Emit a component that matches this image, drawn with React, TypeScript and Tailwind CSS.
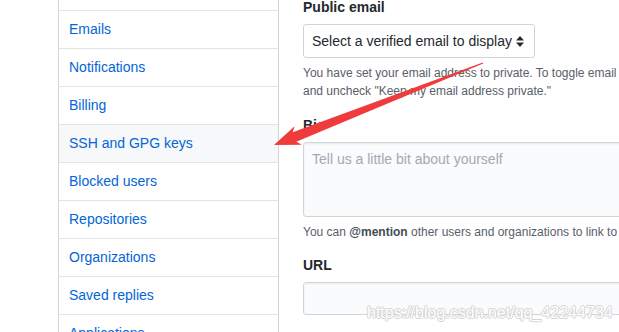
export default function App() {
  const items = [
    "Account",
    "Emails",
    "Notifications",
    "Billing",
    "SSH and GPG keys",
    "Blocked users",
    "Repositories",
    "Organizations",
    "Saved replies",
    "Applications",
  ];

  return (
    <div className="relative w-[619px] h-[332px] overflow-hidden bg-white font-['Liberation_Sans',Arial,sans-serif]">
      <div className="flex items-start pl-[58px]">
        {/* Settings menu */}
        <nav className="w-[221px] shrink-0 -mt-[28px] border border-[#d1d5da] rounded-[3px]">
          {items.map((item, i) => (
            <div
              key={item}
              className={`flex items-center px-[10px] text-[14px] text-[#0366d6] ${
                i === 0 ? "h-[37px]" : "h-[38px] border-t border-[#e1e4e8]"
              } ${item === "SSH and GPG keys" ? "bg-[#f6f8fa]" : ""}`}
            >
              {item}
            </div>
          ))}
        </nav>

        {/* Profile form */}
        <div className="ml-[24px] w-[440px] shrink-0 -mt-[3px]">
          <div>
            <div className="h-[21px] leading-[21px] mb-[6px] text-[14px] font-semibold text-[#24292e]">Public email</div>
            <div className="w-[232px] h-[34px] flex items-center justify-between pl-[8px] pr-[10px] border border-[#d1d5da] rounded-[3px] bg-white text-[14px] text-[#24292e]">
              <span>Select a verified email to display</span>
              <svg width="8" height="11" viewBox="0 0 8 11">
                <path d="M4 0 L8 4.5 H0 Z M4 11 L0 6.5 H8 Z" fill="#24292e" />
              </svg>
            </div>
            <p className="mt-[6px] text-[12px] leading-[18px] text-[#586069] whitespace-nowrap">
              You have set your email address to private. To toggle email privacy, go to email settings
              <br />
              and uncheck "Keep my email address private."
            </p>
          </div>

          <div className="mt-[15px]">
            <div className="h-[21px] leading-[21px] mb-[6px] text-[14px] font-semibold text-[#24292e]">Bio</div>
            <div className="h-[75px] px-[8px] pt-[6px] border border-[#d1d5da] rounded-[3px] bg-[#fafbfc] shadow-[inset_0_1px_2px_rgba(27,31,35,0.075)] text-[14px] text-[#a3aab1]">
              Tell us a little bit about yourself
            </div>
            <p className="mt-[6px] text-[12px] leading-[18px] text-[#586069] whitespace-nowrap">
              You can <span className="font-bold text-[#444d56]">@mention</span> other users and organizations to link to them.
            </p>
          </div>

          <div className="mt-[14px]">
            <div className="h-[21px] leading-[21px] mb-[6px] text-[14px] font-semibold text-[#24292e]">URL</div>
            <div className="h-[33px] border border-[#d1d5da] rounded-[3px] bg-[#fafbfc] shadow-[inset_0_1px_2px_rgba(27,31,35,0.075)]" />
          </div>
        </div>
      </div>

      {/* Red annotation arrow */}
      <svg className="absolute left-0 top-0 pointer-events-none" width="619" height="332">
        <polygon
          points="482.8,62.5 292.7,132.3 294.6,126.2 274,145 301.9,144.8 296.3,141.7 483.2,63.5"
          fill="#ef3b3b"
        />
      </svg>

      {/* Watermark */}
      <div className="absolute left-[367px] top-[304px] text-[16px] leading-[18px] text-white whitespace-nowrap [text-shadow:1px_0_#d4d4d4,-1px_0_#d4d4d4,0_1px_#d4d4d4,0_-1px_#d4d4d4]">
        https://blog.csdn.net/qq_42244734
      </div>
    </div>
  );
}
